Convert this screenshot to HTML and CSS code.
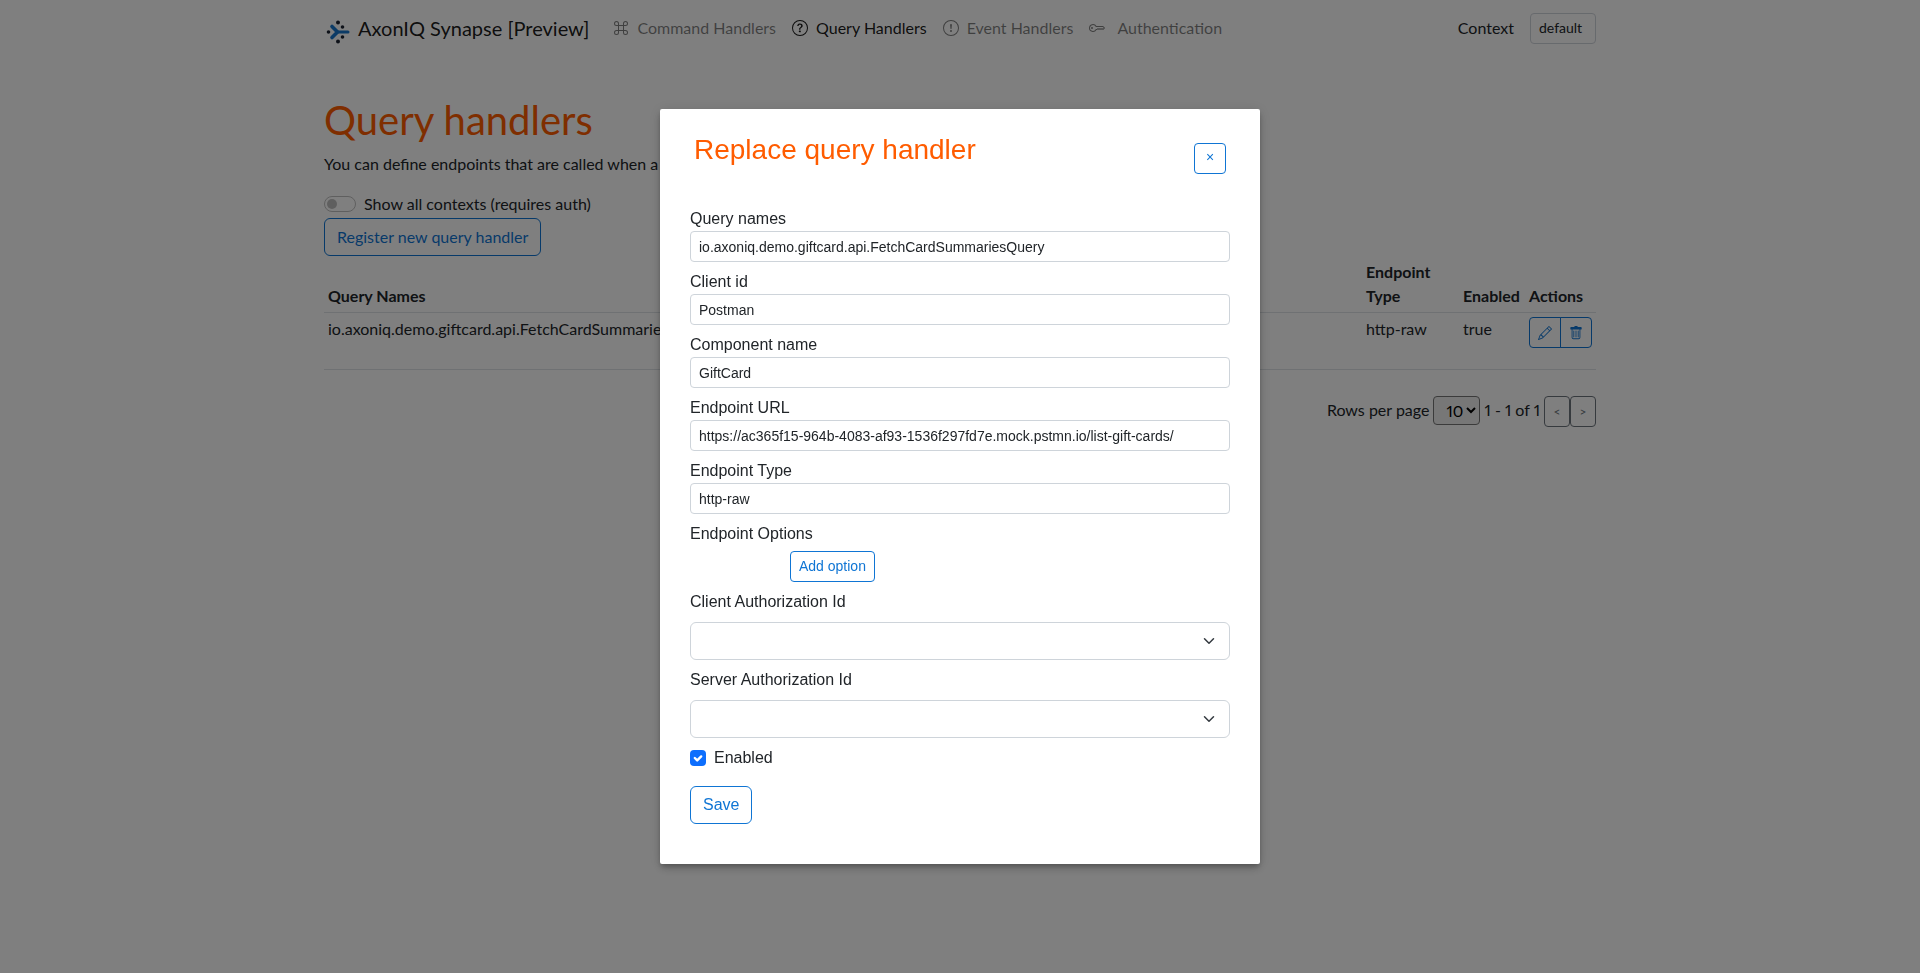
FILE: index.html
```html
<!DOCTYPE html>
<html lang="en">
<head>
<meta charset="utf-8">
<title>AxonIQ Synapse</title>
<link rel="stylesheet" href="styles.css">
</head>
<body>
<div class="container">
  <nav class="navbar">
    <a class="brand" href="#">
      <svg width="24" height="24" viewBox="0 0 24 24" aria-hidden="true">
        <g fill="none" stroke="#1976cc" stroke-width="3.6" stroke-linecap="round"><path d="M6 6.500 11.500 12 6 17.500"/><path d="M11 12h11" stroke-width="3"/></g>
        <g fill="#1d2433"><circle cx="12" cy="2.500" r="2"/><circle cx="16.500" cy="7" r="1.800"/><circle cx="2.500" cy="12" r="1.800"/><circle cx="16.500" cy="17" r="1.800"/><circle cx="12" cy="21.500" r="2"/></g>
      </svg>
      <span>AxonIQ Synapse [Preview]</span>
    </a>
    <a class="nav-link" href="#">
      <svg class="icon" viewBox="0 0 16 16" aria-hidden="true"><path d="M3.5 2A1.5 1.5 0 0 1 5 3.5V5H3.500a1.500 1.500 0 1 1 0-3zM6 5V3.500A2.500 2.500 0 1 0 3.500 6H5v4H3.500A2.500 2.500 0 1 0 6 12.500V11h4v1.500a2.500 2.500 0 1 0 2.500-2.500H11V6h1.500A2.500 2.500 0 1 0 10 3.500V5H6zm4 1v4H6V6h4zm1-1V3.500A1.500 1.500 0 1 1 12.500 5H11zm0 6h1.500a1.500 1.500 0 1 1-1.500 1.500V11zm-6 0v1.500A1.500 1.500 0 1 1 3.500 11H5z"/></svg>
      <span>Command Handlers</span>
    </a>
    <a class="nav-link active" href="#">
      <svg class="icon" viewBox="0 0 16 16" aria-hidden="true"><path d="M8 15A7 7 0 1 1 8 1a7 7 0 0 1 0 14zm0 1A8 8 0 1 0 8 0a8 8 0 0 0 0 16z"/><path d="M5.255 5.786a.237.237 0 0 0 .241.247h.825c.138 0 .248-.113.266-.25.090-.656.540-1.134 1.342-1.134.686 0 1.314.343 1.314 1.168 0 .635-.374.927-.965 1.371-.673.489-1.206 1.060-1.168 1.987l.003.217a.25.25 0 0 0 .25.246h.811a.25.25 0 0 0 .25-.25v-.105c0-.718.273-.927 1.010-1.486.609-.463 1.244-.977 1.244-2.056 0-1.511-1.276-2.241-2.673-2.241-1.267 0-2.655.590-2.750 2.286zm1.557 5.763c0 .533.425.927 1.010.927.609 0 1.028-.394 1.028-.927 0-.552-.420-.940-1.029-.940-.584 0-1.009.388-1.009.940z"/></svg>
      <span>Query Handlers</span>
    </a>
    <a class="nav-link" href="#">
      <svg class="icon" viewBox="0 0 16 16" aria-hidden="true"><path d="M8 15A7 7 0 1 1 8 1a7 7 0 0 1 0 14zm0 1A8 8 0 1 0 8 0a8 8 0 0 0 0 16z"/><path d="M7.002 11a1 1 0 1 1 2 0 1 1 0 0 1-2 0zM7.100 4.995a.905.905 0 1 1 1.800 0l-.350 3.507a.552.552 0 0 1-1.100 0L7.100 4.995z"/></svg>
      <span>Event Handlers</span>
    </a>
    <a class="nav-link auth" href="#">
      <svg class="icon" viewBox="0 0 16 16" aria-hidden="true"><path d="M0 8a4 4 0 0 1 7.465-2H14a.5.5 0 0 1 .354.146l1.500 1.500a.5.5 0 0 1 0 .708l-1.500 1.500a.5.5 0 0 1-.708 0L13 9.207l-.646.647a.5.5 0 0 1-.708 0L11 9.207l-.646.647a.5.5 0 0 1-.708 0L9 9.207l-.646.647A.5.5 0 0 1 8 10h-.535A4 4 0 0 1 0 8zm4-3a3 3 0 1 0 2.712 4.285A.5.5 0 0 1 7.163 9h.630l.853-.854a.5.5 0 0 1 .708 0l.646.647.646-.647a.5.5 0 0 1 .708 0l.646.647.646-.647a.5.5 0 0 1 .708 0l.646.647.793-.793-1-1h-6.630a.5.5 0 0 1-.451-.285A3 3 0 0 0 4 5z"/><path d="M4 8a1 1 0 1 1-2 0 1 1 0 0 1 2 0z"/></svg>
      <span>Authentication</span>
    </a>
    <div class="context">
      <label for="context">Context</label>
      <select id="context" class="context-select"><option>default</option></select>
    </div>
  </nav>

  <main>
    <h1>Query handlers</h1>
    <p class="intro">You can define endpoints that are called when a query</p>
    <label class="switch-row"><input type="checkbox" class="switch" role="switch"><span>Show all contexts (requires auth)</span></label>
    <button class="btn" type="button">Register new query handler</button>

    <table class="handlers">
      <thead>
        <tr><th>Query Names</th><th class="col-type">Endpoint Type</th><th class="col-enabled">Enabled</th><th class="col-actions">Actions</th></tr>
      </thead>
      <tbody>
        <tr>
          <td>io.axoniq.demo.giftcard.api.FetchCardSummariesQuery</td>
          <td>http-raw</td>
          <td>true</td>
          <td>
            <div class="btn-group">
              <button class="btn btn-sm" type="button" aria-label="Edit"><svg class="icon-sm" viewBox="0 0 16 16" aria-hidden="true"><path d="M12.146.146a.5.5 0 0 1 .708 0l3 3a.5.5 0 0 1 0 .708l-10 10a.5.5 0 0 1-.168.110l-5 2a.5.5 0 0 1-.650-.650l2-5a.5.5 0 0 1 .110-.168l10-10zM11.207 2.500 13.500 4.793 14.793 3.500 12.500 1.207 11.207 2.500zm1.586 3L10.500 3.207 4 9.707V10h.5a.5.5 0 0 1 .5.5v.5h.5a.5.5 0 0 1 .5.5v.5h.293l6.500-6.500zm-9.761 5.175-.106.106-1.528 3.821 3.821-1.528.106-.106A.5.5 0 0 1 5 12.500V12h-.5a.5.5 0 0 1-.5-.5V11h-.5a.5.5 0 0 1-.468-.325z"/></svg></button>
              <button class="btn btn-sm" type="button" aria-label="Delete"><svg class="icon-sm" viewBox="0 0 16 16" aria-hidden="true"><path d="M2.500 1a1 1 0 0 0-1 1v1a1 1 0 0 0 1 1H3v9a2 2 0 0 0 2 2h6a2 2 0 0 0 2-2V4h.5a1 1 0 0 0 1-1V2a1 1 0 0 0-1-1H10a1 1 0 0 0-1-1H7a1 1 0 0 0-1 1H2.500zM4 4h8v9a1 1 0 0 1-1 1H5a1 1 0 0 1-1-1V4zm1.500 1a.5.5 0 0 0-.5.5v7a.5.5 0 0 0 1 0v-7a.5.5 0 0 0-.5-.5zM8 5a.5.5 0 0 0-.5.5v7a.5.5 0 0 0 1 0v-7A.5.5 0 0 0 8 5zm3 .5v7a.5.5 0 0 1-1 0v-7a.5.5 0 0 1 1 0z"/></svg></button>
            </div>
          </td>
        </tr>
      </tbody>
    </table>

    <div class="pager">
      <label for="rows">Rows per page</label>
      <select id="rows" class="rows"><option>10</option></select>
      <span>1 - 1 of 1</span>
      <div class="pager-buttons">
        <button class="page-btn" type="button" disabled>&lt;</button><button class="page-btn" type="button" disabled>&gt;</button>
      </div>
    </div>
  </main>
</div>

<div class="backdrop">
  <form class="dialog" role="dialog" aria-modal="true" aria-labelledby="dialog-title">
    <header class="dialog-header">
      <h2 id="dialog-title">Replace query handler</h2>
      <button class="btn btn-sm close" type="button" aria-label="Close"><span>×</span></button>
    </header>
    <div class="field"><label for="names">Query names</label><input id="names" type="text" value="io.axoniq.demo.giftcard.api.FetchCardSummariesQuery"></div>
    <div class="field"><label for="client">Client id</label><input id="client" type="text" value="Postman"></div>
    <div class="field"><label for="component">Component name</label><input id="component" type="text" value="GiftCard"></div>
    <div class="field"><label for="url">Endpoint URL</label><input id="url" type="text" value="https://ac365f15-964b-4083-af93-1536f297fd7e.mock.pstmn.io/list-gift-cards/"></div>
    <div class="field"><label for="type">Endpoint Type</label><input id="type" type="text" value="http-raw"></div>
    <div class="field options"><span>Endpoint Options</span><button class="btn btn-sm" type="button">Add option</button></div>
    <div class="field auth-field"><label for="client-auth">Client Authorization Id</label>
      <div class="select-wrap"><select id="client-auth"><option></option></select><svg class="chevron" viewBox="0 0 16 16" aria-hidden="true"><path d="m2 5 6 6 6-6"/></svg></div></div>
    <div class="field auth-field"><label for="server-auth">Server Authorization Id</label>
      <div class="select-wrap"><select id="server-auth"><option></option></select><svg class="chevron" viewBox="0 0 16 16" aria-hidden="true"><path d="m2 5 6 6 6-6"/></svg></div></div>
    <label class="check-row"><span class="check-wrap"><input type="checkbox" checked><svg class="tick" viewBox="0 0 20 20" aria-hidden="true"><path d="m6 10 3 3 5-5"/></svg></span><span>Enabled</span></label>
    <button class="btn" type="button">Save</button>
  </form>
</div>
</body>
</html>
```
FILE: styles.css
```css
*, *::before, *::after { box-sizing: border-box; }

body {
  margin: 0;
  background: #fff;
  color: #212529;
  font: 16px/24px Lato, sans-serif;
  font-variant-numeric: proportional-nums;
}

button, input, select { font: inherit; color: inherit; margin: 0; }
h1, h2, p { margin: 0; }

.container {
  max-width: 1320px;
  margin: 0 auto;
  padding: 0 24px;
}

/* Navigation */
.navbar {
  display: flex;
  align-items: center;
  height: 56px;
}
.brand {
  display: flex;
  align-items: center;
  gap: 6px;
  margin-right: 16px;
  color: rgba(0, 0, 0, .9);
  font-size: 20px;
  line-height: 30px;
  text-decoration: none;
}
.brand svg { width: 28px; height: 24px; margin-top: 8px; }
.nav-link {
  display: flex;
  align-items: center;
  gap: 8px;
  padding: 8px;
  color: rgba(0, 0, 0, .5);
  text-decoration: none;
}
.nav-link.active { color: rgba(0, 0, 0, .9); }
.nav-link.auth { gap: 12px; }
.icon { width: 16px; height: 16px; fill: currentColor; }
.icon-sm { width: 14px; height: 14px; fill: currentColor; }
.context {
  display: flex;
  align-items: center;
  gap: 16px;
  margin-left: auto;
}
.context-select {
  appearance: none;
  width: 66px;
  height: 31px;
  padding: 0 8px;
  border: 1px solid #ced4da;
  border-radius: 4px;
  background: #fff;
  font-size: 14px;
}

/* Page */
main { padding-top: 40px; }
h1 {
  margin-bottom: 8px;
  color: #ff5c00;
  font-size: 40px;
  font-weight: 400;
  line-height: 48px;
}
.intro { margin-bottom: 16px; }
.switch-row {
  display: flex;
  align-items: center;
  gap: 8px;
  margin-bottom: 2px;
}
.switch {
  appearance: none;
  display: flex;
  align-items: center;
  width: 32px;
  height: 16px;
  padding: 0 2px;
  border: 1px solid #bfbfbf;
  border-radius: 8px;
}
.switch::before {
  content: "";
  width: 10px;
  height: 10px;
  border-radius: 5px;
  background: #bfbfbf;
}
.btn {
  padding: 6px 12px;
  border: 1px solid #0f75d4;
  border-radius: 6px;
  background: transparent;
  color: #0f75d4;
}
.btn-sm {
  padding: 4px 8px;
  border-radius: 4px;
  font-size: 14px;
  line-height: 21px;
}
.btn-group { display: flex; padding-bottom: 17px; }
.btn-group .btn {
  display: flex;
  align-items: center;
  width: 32px;
  height: 31px;
}
.btn-group .btn:first-child { border-radius: 4px 0 0 4px; }
.btn-group .btn:last-child { margin-left: -1px; border-radius: 0 4px 4px 0; }

.handlers {
  width: 100%;
  border-collapse: collapse;
  text-align: left;
}
.handlers th, .handlers td {
  padding: 4px;
  border-bottom: 1px solid #dee2e6;
  vertical-align: top;
}
.handlers th { vertical-align: bottom; }
.handlers .col-type { width: 97px; }
.handlers .col-enabled { width: 66px; }
.handlers .col-actions { width: 71px; }

.pager {
  display: flex;
  align-items: flex-start;
  justify-content: flex-end;
  gap: 4px;
  margin-top: 26px;
  line-height: 28px;
}
.rows {
  width: 47px;
  height: 29px;
  padding: 0 0 0 8px;
  border: 1px solid #767676;
  border-radius: 4px;
  background: #efefef;
  color: #000;
}
.pager-buttons { display: flex; }
.page-btn {
  width: 26px;
  height: 31px;
  padding: 0;
  border: 1px solid #6c757d;
  border-radius: 4px;
  background: transparent;
  color: #6c757d;
  font-size: 12px;
}

/* Dialog */
.backdrop {
  position: fixed;
  inset: 0;
  display: flex;
  align-items: center;
  justify-content: center;
  background: rgba(0, 0, 0, .5);
  font-family: "Liberation Sans", Arial, sans-serif;
}
.dialog {
  width: 600px;
  max-width: 100%;
  padding: 24px 30px 40px;
  border-radius: 2px;
  background: #fff;
  box-shadow: 0 3px 5px -1px rgba(0, 0, 0, .2), 0 5px 8px rgba(0, 0, 0, .14), 0 1px 14px rgba(0, 0, 0, .12);
}
.dialog-header {
  display: flex;
  align-items: flex-start;
  justify-content: space-between;
  padding: 0 4px;
  margin-bottom: 33px;
}
.dialog-header h2 {
  color: #ff5c00;
  font-size: 28px;
  font-weight: 400;
  line-height: 34px;
}
.close { width: 32px; height: 31px; margin-top: 10px; padding: 3px 8px 5px; }
.field { display: flex; flex-direction: column; margin-bottom: 8px; }
.field input {
  width: 100%;
  height: 31px;
  padding: 4px 8px;
  border: 1px solid #ced4da;
  border-radius: 4px;
  background: #fff;
  font-size: 14px;
  line-height: 21px;
}
.options { align-items: flex-start; gap: 5px; }
.options .btn { margin-left: 100px; }
.auth-field { gap: 8px; }
.select-wrap { position: relative; }
.select-wrap select {
  appearance: none;
  display: block;
  width: 100%;
  height: 38px;
  padding: 6px 36px 6px 12px;
  border: 1px solid #ced4da;
  border-radius: 6px;
  background: #fff;
}
.chevron {
  position: absolute;
  top: 13px;
  right: 15px;
  width: 12px;
  height: 12px;
  fill: none;
  stroke: #343a40;
  stroke-width: 2;
  stroke-linecap: round;
  stroke-linejoin: round;
  pointer-events: none;
}
.check-row {
  display: flex;
  align-items: center;
  gap: 8px;
  margin-bottom: 16px;
}
.check-wrap { position: relative; display: flex; }
.check-wrap input {
  appearance: none;
  width: 16px;
  height: 16px;
  border-radius: 4px;
  background: #0d6efd;
}
.tick {
  position: absolute;
  inset: 0;
  fill: none;
  stroke: #fff;
  stroke-width: 3;
  stroke-linecap: round;
  stroke-linejoin: round;
}
```
